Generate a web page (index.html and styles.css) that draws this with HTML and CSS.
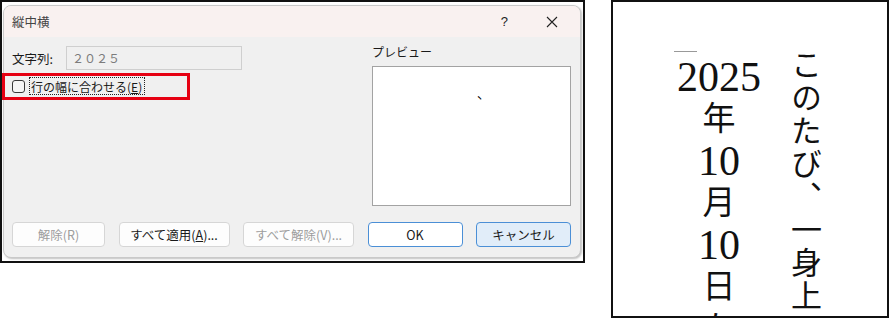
FILE: index.html
```html
<!DOCTYPE html>
<html lang="ja">

<head>
    <meta charset="UTF-8">
    <meta name="viewport" content="width=device-width, initial-scale=1.0">
    <title>縦中横</title>
    <link rel="stylesheet" href="styles.css">
</head>

<body>

    <div class="page">
        <!-- ダイアログのスクリーンショット -->
        <div class="frame dlg-frame">
            <div class="dialog">
                <div class="titlebar">
                    <span class="title">縦中横</span>
                    <span class="tb-help">?</span>
                    <svg class="tb-close" width="12" height="12" viewBox="0 0 12 12">
                        <path d="M1 1 L11 11 M11 1 L1 11" stroke="#222" stroke-width="1.1" fill="none" />
                    </svg>
                </div>
                <div class="dlg-body">
                    <div class="main">
                        <div class="fields">
                            <div class="field-row">
                                <span class="field-label">文字列:</span>
                                <div class="text-input">２０２５</div>
                            </div>
                            <div class="check-row">
                                <span class="checkbox"></span>
                                <span class="check-label">行の幅に合わせる(<u>E</u>)</span>
                            </div>
                        </div>
                        <div class="preview-col">
                            <div class="preview-label">プレビュー</div>
                            <div class="preview"><span class="preview-mark">、</span></div>
                        </div>
                    </div>
                    <div class="buttons">
                        <div class="btn btn-sm disabled">解除(R)</div>
                        <div class="btn btn-lg">すべて適用(<u>A</u>)...</div>
                        <div class="btn btn-lg disabled">すべて解除(V)...</div>
                        <div class="btn btn-md primary">OK</div>
                        <div class="btn btn-md primary focused">キャンセル</div>
                    </div>
                </div>
            </div>
            <div class="highlight"></div>
        </div>

        <!-- 文書の縦書き部分 -->
        <div class="frame doc-frame">
            <div class="columns">
                <div class="col-left">
                    <div class="tcy-mark"></div>
                    <div class="cell num">2025</div>
                    <div class="cell">年</div>
                    <div class="cell num">10</div>
                    <div class="cell">月</div>
                    <div class="cell num">10</div>
                    <div class="cell">日</div>
                    <div class="cell">な</div>
                </div>
                <div class="col-right">このたび、一身上の</div>
            </div>
        </div>
    </div>

</body>

</html>
```

FILE: styles.css
```css
body {
    margin: 0;
    padding: 0;
    background-color: #fff;
    font-family: "Noto Sans CJK JP", sans-serif;
    font-size: 12px;
    color: #1a1a1a;
}

.page {
    display: flex;
    align-items: flex-start;
    gap: 26px;
}

.frame {
    border: 2px solid #111;
    box-sizing: border-box;
    overflow: hidden;
}

/* ---- 左: ダイアログ ---- */

.dlg-frame {
    position: relative;
    width: 585px;
    height: 263px;
    padding: 3px 0 0 1px;
    background-color: #fff;
}

.dialog {
    width: 578px;
    height: 253px;
    box-sizing: border-box;
    border: 1px solid #c9c9c9;
    border-radius: 8px;
    background-color: #f0f0f0;
    box-shadow: 1px 1px 2px rgba(0, 0, 0, 0.25);
    overflow: hidden;
}

.titlebar {
    height: 31px;
    display: flex;
    align-items: center;
    padding: 0 0 0 8px;
    background-color: #f9f1f0;
}

.title {
    flex: 1;
    font-size: 12.5px;
    color: #444;
}

.tb-help {
    font-family: "Liberation Sans", sans-serif;
    font-size: 13px;
    color: #222;
    margin-right: 38px;
}

.tb-close {
    margin-right: 22px;
}

.dlg-body {
    padding: 9px 9px 0 8px;
}

.main {
    display: flex;
    justify-content: space-between;
    height: 160px;
}

.field-row {
    display: flex;
    align-items: center;
    height: 24px;
}

.field-label {
    width: 54px;
    font-size: 12.5px;
}

.text-input {
    width: 176px;
    height: 24px;
    box-sizing: border-box;
    border: 1px solid #cfcfcf;
    padding-left: 5px;
    line-height: 22px;
    color: #7c7c7c;
    font-size: 12px;
}

.check-row {
    display: flex;
    align-items: center;
    margin-top: 7px;
    height: 18px;
}

.checkbox {
    width: 13px;
    height: 13px;
    box-sizing: border-box;
    border: 1px solid #3a3a3a;
    border-radius: 3px;
    background-color: #f6f6f6;
}

.check-label {
    margin-left: 4px;
    padding: 0 2px 0 1px;
    height: 18px;
    line-height: 17px;
    box-sizing: border-box;
    border: 1px dotted #222;
    font-size: 12px;
}

.preview-col {
    width: 199px;
}

.preview-label {
    height: 16px;
    line-height: 12px;
    margin-bottom: 4px;
}

.preview {
    height: 140px;
    box-sizing: border-box;
    border: 1px solid #a3a3a3;
    background-color: #fff;
    padding: 16px 0 0 104px;
}

.preview-mark {
    font-size: 13px;
    color: #000;
}

.buttons {
    display: flex;
    justify-content: space-between;
    margin-top: 16px;
}

.btn {
    height: 25px;
    box-sizing: border-box;
    border: 1px solid #d6d6d6;
    border-radius: 4px;
    background-color: #fdfdfd;
    text-align: center;
    line-height: 23px;
    font-size: 12.5px;
}

.btn-sm {
    width: 93px;
}

.btn-lg {
    width: 111px;
}

.btn-md {
    width: 95px;
}

.disabled {
    color: #9d9d9d;
}

.primary {
    border-color: #4b8fd6;
    background-color: #fff;
}

.focused {
    background-color: #e1edf9;
}

.highlight {
    position: absolute;
    left: 0;
    top: 71px;
    width: 188px;
    height: 27px;
    box-sizing: border-box;
    border: 3px solid #e60012;
}

/* ---- 右: 縦書き文書 ---- */

.doc-frame {
    width: 278px;
    height: 318px;
    padding: 46px 0 0 62px;
    background-color: #fff;
}

.columns {
    display: flex;
    align-items: flex-start;
    gap: 27px;
}

.col-left {
    width: 88px;
    padding-top: 3px;
    display: flex;
    flex-direction: column;
    align-items: center;
}

.tcy-mark {
    align-self: flex-start;
    width: 23px;
    height: 1px;
    margin-left: -1px;
    margin-bottom: 4px;
    background-color: #999;
}

.cell {
    height: 42px;
    box-sizing: border-box;
    padding-bottom: 5px;
    line-height: 37px;
    font-size: 33px;
    color: #111;
}

.num {
    padding-bottom: 0;
    line-height: 42px;
    font-family: "Liberation Serif", serif;
    font-size: 42px;
}

.col-right {
    writing-mode: vertical-rl;
    font-size: 31px;
    line-height: 33px;
    letter-spacing: 2px;
    color: #111;
    margin-top: 1px;
}
```
